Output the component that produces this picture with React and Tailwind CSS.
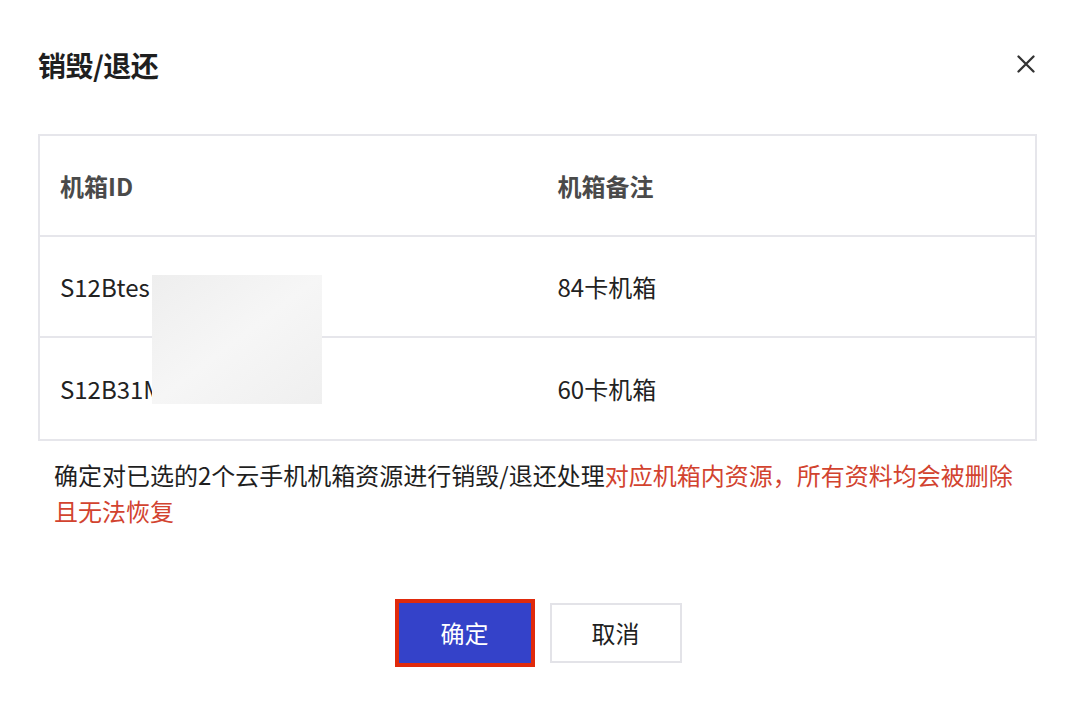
import React from "react";

const rows = [
  { id: "S12Btes", note: "84卡机箱" },
  { id: "S12B31M", note: "60卡机箱" },
];

export default function App() {
  return (
    <div
      className="w-[1078px] h-[710px] bg-white relative"
      style={{ fontFamily: '"Noto Sans CJK SC", "Noto Sans", sans-serif' }}
    >
      {/* Header */}
      <div className="flex items-center justify-between pl-[38px] pr-[43px] pt-[41px] h-[88px]">
        <h2 className="text-[28px] font-bold text-[#1f1f1f] leading-none tracking-[-0.5px]">销毁/退还</h2>
        <button className="w-[18px] h-[18px] flex items-center justify-center text-[#333] -mt-[2px]">
          <svg width="18" height="18" viewBox="0 0 18 18" fill="none">
            <path d="M1.5 1.5 L16.5 16.5 M16.5 1.5 L1.5 16.5" stroke="currentColor" strokeWidth="2.3" strokeLinecap="round" />
          </svg>
        </button>
      </div>

      {/* Table */}
      <div className="ml-[38px] mr-[41px] mt-[46px] relative border-2 border-[#e6e6eb]">
        <div className="grid grid-cols-2 h-[101px] items-center border-b-2 border-[#e6e6eb] text-[24px] font-bold text-[#4a4a4a]">
          <div className="pl-[20px]">机箱ID</div>
          <div className="pl-[20px]">机箱备注</div>
        </div>
        {rows.map((r, i) => (
          <div
            key={r.id}
            className={
              "grid grid-cols-2 h-[101px] items-center text-[24px] text-[#222]" +
              (i < rows.length - 1 ? " border-b-2 border-[#e6e6eb]" : "")
            }
          >
            <div className="pl-[20px]">{r.id}</div>
            <div className="pl-[20px]">{r.note}</div>
          </div>
        ))}
        {/* blurred mask */}
        <div className="absolute left-[112px] top-[139px] w-[170px] h-[129px] bg-gradient-to-br from-[#eeeeee] via-[#f6f6f6] to-[#efefef]" />
      </div>

      {/* Description */}
      <p className="pl-[54px] pr-[58px] mt-[16px] text-[24px] leading-[36px] text-[#1f1f1f]">
        确定对已选的2个云手机机箱资源进行销毁/退还处理
        <span className="text-[#d2432f]">对应机箱内资源，所有资料均会被删除且无法恢复</span>
      </p>

      {/* Footer */}
      <div className="flex justify-center gap-[19px] mt-[74px] pl-[2px]">
        <button className="w-[132px] h-[60px] bg-[#3442c9] text-white text-[24px] ring-4 ring-[#e02a0c]">
          确定
        </button>
        <button className="w-[132px] h-[60px] bg-white text-[#1f1f1f] text-[24px] border-2 border-[#e3e3e8]">
          取消
        </button>
      </div>
    </div>
  );
}
